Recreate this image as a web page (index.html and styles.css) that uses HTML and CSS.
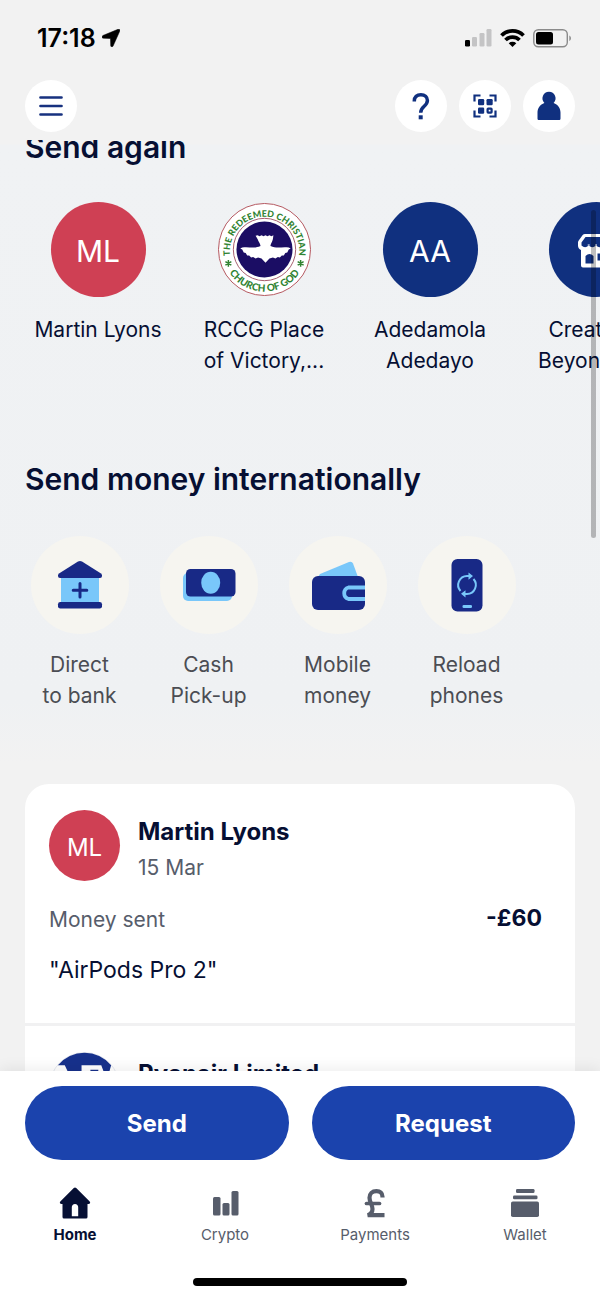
FILE: index.html
```html
<!DOCTYPE html>
<html lang="en">
<head>
<meta charset="utf-8">
<meta name="viewport" content="width=device-width, initial-scale=1">
<title>Home</title>
<link rel="stylesheet" href="styles.css">
</head>
<body>
<div class="app">
  <header class="header">
    <div class="status">
      <span class="clock">17:18</span>
      <svg class="location" width="18" height="18" viewBox="0 0 18 18" aria-hidden="true"><path d="M16 .3.9 6.500C-.4 7.200-.1 9.200 1.300 9.200L8 9.500c.4 0 .5.200.5.500l.2 6.700c0 1.400 1.800 1.600 2.400.3L17.800 2C18.300.8 17.300-.2 16 .3z" stroke="#000" stroke-width=".5"/></svg>
      <svg class="signal" width="27" height="18" viewBox="0 0 27 18" aria-hidden="true"><rect y="11" width="5" height="6.500" rx="1.300"/><g fill="#c4c4c5"><rect x="7" y="8" width="5" height="9.500" rx="1.300"/><rect x="14.500" y="4" width="5" height="13.500" rx="1.300"/><rect x="21.500" y="0" width="5" height="17.500" rx="1.300"/></g></svg>
      <svg class="wifi" width="25" height="18" viewBox="0 0 25 18" aria-hidden="true"><g fill="none" stroke="#000" stroke-width="3.800"><path d="M1.500 6.500a15.600 15.600 0 0 1 22 0"/><path d="M5.500 11a10 10 0 0 1 14 0"/></g><path d="M12.500 18 8.700 14.300a5.600 5.600 0 0 1 7.600 0z"/></svg>
      <svg class="battery" width="39" height="19" viewBox="0 0 39 19" aria-hidden="true"><rect x=".8" y=".8" width="33.500" height="17" rx="4.500" fill="none" stroke="#8b8b8b" stroke-width="1.400"/><rect x="3" y="3" width="17" height="12.600" rx="2.500"/><path d="M36.300 6.500c2.200 1 2.200 4.500 0 5.500z" fill="#8b8b8b"/></svg>
    </div>
    <div class="toolbar">
      <button class="round" type="button" aria-label="Menu"><svg width="24" height="22" viewBox="0 0 24 22"><path d="M1.500 2.500h21M1.500 11h21M1.500 19.500h21" stroke="#17317f" stroke-width="2.700" stroke-linecap="round"/></svg></button>
      <div class="tools">
        <button class="round" type="button" aria-label="Help"><svg width="18" height="28" viewBox="0 0 18 28"><path d="M2.300 9.500V9c0-4 2.600-6.300 6.600-6.300 3.900 0 6.500 2.400 6.500 5.800 0 6-6.700 5.500-6.700 12.200" fill="none" stroke="#10307f" stroke-width="3.500"/><rect x="6.700" y="23.300" width="4" height="4" fill="#10307f"/></svg></button>
        <button class="round" type="button" aria-label="Scan code"><svg width="24" height="24" viewBox="0 0 24 24"><g fill="none" stroke="#10307f" stroke-width="2.200"><path d="M1.500 7.500v-6h6M16.500 1.500h6v6M22.500 16.500v6h-6M7.500 22.500h-6v-6"/><rect x="14.600" y="14.600" width="4" height="4" rx=".6"/></g><g fill="#10307f"><rect x="5" y="5" width="6.200" height="6.200" rx="1.200"/><rect x="13.500" y="5" width="6.200" height="6.200" rx="1.200"/><rect x="5" y="13.500" width="6.200" height="6.200" rx="1.200"/></g></svg></button>
        <button class="round" type="button" aria-label="Profile"><svg width="24" height="30" viewBox="0 0 24 30"><path d="M12 .8a6.500 6.500 0 0 1 4.600 11.100c4.300 1.600 6.900 5 6.900 9.600v6c0 1-.6 1.500-1.500 1.500H2C1.100 29 .5 28.500.5 27.500v-6c0-4.600 2.600-8 6.900-9.600A6.500 6.500 0 0 1 12 .8z" fill="#10307f"/></svg></button>
      </div>
    </div>
  </header>

  <main class="content">
    <section class="again">
      <h2>Send again</h2>
      <ul class="people">
        <li><span class="avatar red">ML</span><span>Martin Lyons</span></li>
        <li>
          <svg class="crest" viewBox="0 0 96 96" role="img" aria-label="The Redeemed Christian Church of God">
            <defs><path id="upper" d="M14.500 60A35 35 0 1 1 81.500 60"/><path id="lower" d="M5.500 48A42.500 42.500 0 0 0 90.500 48"/></defs>
            <circle cx="48" cy="48" r="46.500" fill="#fff" stroke="#b4575f" stroke-width="1"/>
            <circle cx="48" cy="48" r="31.500" fill="none" stroke="#9c4a5c" stroke-width=".9"/>
            <circle cx="48" cy="48" r="28.300" fill="#1b0d64"/>
            <path d="m39 34 2-.5 2 1 2-1 2 1 2-1 2 1 2-1 2 1 2-1-.5 4c-1 4-2 4-2.500 7 7 3 11 .5 18.500 1.500l2 1-2 1-1.500 3-2 .5-1.500 2.500-2 0-2 2-2-.5-2.500 1.500-2.500-1-3.500 1-4 4.500-4-4.500-3.500-1-2.500 1-2.500-1.500-2 .5-2-2-2 0-1.500-2.500-2-.5-1.500-3-2-1 2-1c7.500-1 11.500 1.500 18.500-1.500-.5-3-2-4-3-7z" fill="#fff"/>
            <g class="crest-text"><text class="crest-upper" text-anchor="middle"><textPath href="#upper" startOffset="50%">THE REDEEMED CHRISTIAN</textPath></text><text text-anchor="middle"><textPath href="#lower" startOffset="50%">CHURCH OF GOD</textPath></text></g>
            <path d="M11.500 58.500v7M8.500 60.200l6 3.500M14.500 60.200l-6 3.500M84.500 58.500v7M81.500 60.200l6 3.500M87.500 60.200l-6 3.500" stroke="#318332" stroke-width="1.500"/>
          </svg>
          <span>RCCG Place of Victory,...</span>
        </li>
        <li><span class="avatar blue">AA</span><span>Adedamola Adedayo</span></li>
        <li><span class="avatar blue"><svg width="38" height="36" viewBox="0 0 38 36"><path d="M8 1h22q1.500 0 2.300 1l4 5.500q.7 1 .7 2v3q0 3-3 4.500v15.500q0 2-2 2H6q-2 0-2-2V17q-3-1.500-3-4.500v-3q0-1 .7-2l4-5.500Q6.500 1 8 1z" fill="#fff"/><path d="M8.500 4h21l4 5.500v3q-3.500 3.500-7.200 0-3.600 3.500-7.300 0-3.600 3.500-7.300 0-3.700 3.500-7.200 0v-3z" fill="#10307f"/><path d="M11.700 12.500v-1M19 12.500v-1M26.300 12.500v-1" stroke="#fff" stroke-width="2"/><path d="M8.500 30.500V23q4-4 8 0v7.500zM20.500 20.500h9v7h-9z" fill="#10307f"/></svg></span><span>Creativity Beyond Li...</span></li>
      </ul>
    </section>

    <section class="international">
      <h2>Send money internationally</h2>
      <nav class="services" aria-label="Send money internationally">
        <a href="#bank"><span class="disc"><svg width="52" height="52" viewBox="0 0 52 52"><path d="M7 18h38v28H7z" fill="#79c7fa"/><path d="M24 2.600q2-1.200 4 0l19 11.800q1 .8 1 2V17q0 2-2 2H6q-2 0-2-2v-.6q0-1.200 1-2z" fill="#182986"/><rect x="4" y="43" width="44" height="6.500" rx="2.300" fill="#182986"/><path d="M26 24.500v13.500M19.200 31.200h13.600" stroke="#182986" stroke-width="3" stroke-linecap="round"/></svg></span><span>Direct<br>to bank</span></a>
        <a href="#cash"><span class="disc"><svg width="54" height="36" viewBox="0 0 54 36"><rect x="1" y="6" width="49" height="28" rx="5" fill="#79c7fa"/><rect x="4" y="2" width="49.500" height="27.500" rx="4.500" fill="#182986"/><ellipse cx="28.700" cy="15.700" rx="9.500" ry="11" fill="#79c7fa"/></svg></span><span>Cash<br>Pick-up</span></a>
        <a href="#mobile"><span class="disc"><svg width="54" height="52" viewBox="0 0 54 52"><path d="m7 18 2-3L38 3q3-1 4 1.500L47 18z" fill="#79c7fa"/><rect x="1" y="17" width="53" height="34" rx="6" fill="#182986"/><path d="M54 28.500H37.500a6 6 0 0 0 0 11.500H54" fill="none" stroke="#79c7fa" stroke-width="3.800"/></svg></span><span>Mobile<br>money</span></a>
        <a href="#reload"><span class="disc"><svg width="32" height="54" viewBox="0 0 32 54"><rect x=".5" y="1" width="31" height="52.500" rx="6" fill="#182986"/><g fill="none" stroke="#79c7fa" stroke-width="2"><path d="M9.500 33A9 9 0 0 1 16 18H19.500M22.500 21A9 9 0 0 1 16 36H12.500"/></g><path d="m17.500 14.500 4.500 3.600-4.500 3.600zM14.500 32.200 10 35.800l4.500 3.700z" fill="#79c7fa"/><rect x="11.500" y="47" width="9.500" height="3" rx="1.300" fill="#79c7fa"/></svg></span><span>Reload<br>phones</span></a>
      </nav>
    </section>

    <section class="activity" aria-label="Recent activity">
      <article class="payment">
        <span class="avatar small red">ML</span>
        <div class="payee"><h3>Martin Lyons</h3><p class="muted">15 Mar</p></div>
        <p class="kind muted">Money sent</p>
        <p class="amount">-£60</p>
        <p class="note">"AirPods Pro 2"</p>
      </article>
      <article class="payment">
        <svg class="merchant" viewBox="0 0 72 72" aria-hidden="true"><circle cx="36" cy="36" r="35.500" fill="#fff" stroke="#e5e8ef"/><path d="M9 13.500a35 35 0 0 1 54 0L60 24h-3l-4-10.500H33V24H21l-5-10.500z" fill="#17318c"/><path d="M42 18h8v6h-8z" fill="#17318c"/></svg>
        <div class="payee"><h3>Ryanair Limited</h3></div>
      </article>
    </section>
    <span class="scrollbar"></span>
  </main>

  <footer class="dock">
    <div class="actions"><button type="button">Send</button><button type="button">Request</button></div>
    <nav class="tabs" aria-label="Main">
      <a class="current" href="#home"><svg width="32" height="32" viewBox="0 0 32 32"><path d="M14.800 1q1.200-1 2.400 0L30.700 14.500q.8.900.3 1.800-.5.700-1.500.7H28.500v13q0 1.500-1.500 1.500H5Q3.500 31.500 3.500 30V17h-1q-1 0-1.500-.7-.5-.9.300-1.800zM16 17a3.200 3.200 0 0 0-3.200 3.500v8.700h6.400v-8.700A3.200 3.200 0 0 0 16 17z" fill="#060f33" fill-rule="evenodd"/></svg>Home</a>
      <a href="#crypto"><svg width="32" height="32" viewBox="0 0 32 32"><g fill="#575d6b"><rect x="4" y="10" width="7.500" height="18.500" rx="1.500"/><rect x="13.500" y="16" width="7" height="12.500" rx="1.500"/><rect x="22.500" y="4" width="7" height="24.500" rx="1.500"/></g></svg>Crypto</a>
      <a href="#payments"><svg width="32" height="32" viewBox="0 0 32 32"><path d="M23.500 10.500V9.700c0-3.700-2.300-5.500-6-5.500-4.500 0-7 2.400-7 6.500 0 4.500 3 7 3 11.300 0 3-2 5.300-4.800 6.200H25.500" fill="none" stroke="#575d6b" stroke-width="4.200"/><path d="M7.500 16.500h13" stroke="#575d6b" stroke-width="3.700" stroke-linecap="round"/></svg>Payments</a>
      <a href="#wallet"><svg width="32" height="32" viewBox="0 0 32 32"><g fill="#575d6b"><rect x="7" y="2" width="18.500" height="4" rx="1.300"/><rect x="4" y="8.500" width="24.500" height="3.700" rx="1.300"/><rect x="2" y="14.500" width="28" height="15.500" rx="1.800"/></g></svg>Wallet</a>
    </nav>
    <span class="home-bar"></span>
  </footer>
</div>
</body>
</html>
```

FILE: styles.css
```css
* { box-sizing: border-box; }

body {
  margin: 0;
  background: #f2f2f2;
  color: #060f33;
  font-family: Inter, "Liberation Sans", sans-serif;
}

h2, h3, p, ul { margin: 0; padding: 0; }
ul { list-style: none; }
a { color: inherit; text-decoration: none; }
button { border: 0; padding: 0; font: inherit; }
svg { display: block; flex: none; }

.app {
  display: flex;
  flex-direction: column;
  height: 100vh;
}

.header {
  flex: none;
  padding-bottom: 8px;
}

.status {
  display: flex;
  align-items: center;
  height: 80px;
  padding: 0 28px 4px 37px;
  color: #000;
}

.clock { font-size: 25px; font-weight: 600; }
.location { margin-left: 6px; }
.signal { margin-left: auto; }
.wifi { margin-left: 8px; }
.battery { margin-left: 8px; }

.toolbar {
  display: flex;
  justify-content: space-between;
  padding: 0 25px;
}

.tools { display: flex; gap: 12px; }

.round {
  display: grid;
  place-items: center;
  width: 52px;
  height: 52px;
  border-radius: 50%;
  background: #fff;
}

.content {
  position: relative;
  flex: 1;
  min-height: 0;
  overflow: hidden;
  background: linear-gradient(#f2f2f2 4px, #f0f2f4 5px, #eff1f3 560px, #f2f2f2 624px);
}

h2 {
  padding: 0 25px;
  font-size: 30px;
  font-weight: 600;
  line-height: 36px;
}

.again { margin-top: -11px; }

.people {
  display: flex;
  padding: 37px 0 0 15px;
  overflow: hidden;
}

.people li {
  display: flex;
  flex: none;
  flex-direction: column;
  align-items: center;
  gap: 17px;
  width: 166px;
  padding: 0 16px;
  font-size: 21px;
  line-height: 31px;
  text-align: center;
}

.people li > span:last-child { width: 134px; }

.avatar {
  display: grid;
  place-items: center;
  width: 95px;
  height: 95px;
  padding-top: 3px;
  border-radius: 50%;
  color: #fff;
  font-size: 30px;
}

.avatar.small { width: 71px; height: 71px; font-size: 24px; }
.red { background: #cf4054; }
.blue { background: #10307f; }
.crest { width: 95px; height: 95px; }

.crest-text {
  fill: #318332;
  font-family: Lato, sans-serif;
  font-size: 10px;
  font-weight: 900;
}

.crest-upper { font-size: 9px; }

.international { margin-top: 85px; }

.services {
  display: flex;
  padding: 39px 0 0 15px;
}

.services a {
  display: flex;
  flex-direction: column;
  align-items: center;
  gap: 15px;
  width: 129px;
  color: #4b4d53;
  font-size: 21px;
  line-height: 31px;
  text-align: center;
}

.disc {
  display: grid;
  place-items: center;
  width: 98px;
  height: 98px;
  border-radius: 50%;
  background: #f6f5f0;
}

.activity {
  margin: 73px 25px 0;
  border-radius: 24px 24px 0 0;
  background: #fff;
}

.payment {
  display: grid;
  grid-template-columns: 71px 1fr auto;
  column-gap: 18px;
  padding: 26px 33px 35px 24px;
}

.payment + .payment { border-top: 3px solid #f1f1f2; }

.payee { grid-column: 2 / -1; }

h3 {
  padding-top: 4px;
  font-size: 24px;
  font-weight: 700;
  line-height: 36px;
}

.muted { color: #575d6b; font-size: 21px; line-height: 36px; }
.kind { grid-column: 1 / 3; padding-top: 16px; }
.amount { padding-top: 16px; font-size: 23px; font-weight: 700; line-height: 32px; }
.note { grid-column: 1 / -1; padding-top: 14px; font-size: 23px; line-height: 36px; }
.merchant { width: 71px; height: 71px; }

.scrollbar {
  position: absolute;
  top: 70px;
  right: 4px;
  width: 5px;
  height: 328px;
  border-radius: 3px;
  background: rgba(0, 0, 0, 0.25);
}

.dock {
  position: relative;
  flex: none;
  padding: 15px 0 12px;
  background: #fff;
  box-shadow: 0 -2px 14px rgba(0, 0, 0, 0.08);
}

.actions {
  display: grid;
  grid-template-columns: 1fr 1fr;
  gap: 23px;
  padding: 0 25px;
}

.actions button {
  height: 74px;
  border-radius: 37px;
  background: #1b43ad;
  color: #fff;
  font-size: 24px;
  font-weight: 700;
}

.tabs {
  display: grid;
  grid-template-columns: repeat(4, 1fr);
  padding: 27px 0 33px;
}

.tabs a {
  display: flex;
  flex-direction: column;
  align-items: center;
  gap: 6px;
  color: #575d6b;
  font-size: 15px;
  line-height: 20px;
}

.tabs .current { color: #060f33; font-weight: 700; }

.home-bar {
  display: block;
  width: 214px;
  height: 8px;
  margin: 0 auto;
  border-radius: 4px;
  background: #000;
}
```
